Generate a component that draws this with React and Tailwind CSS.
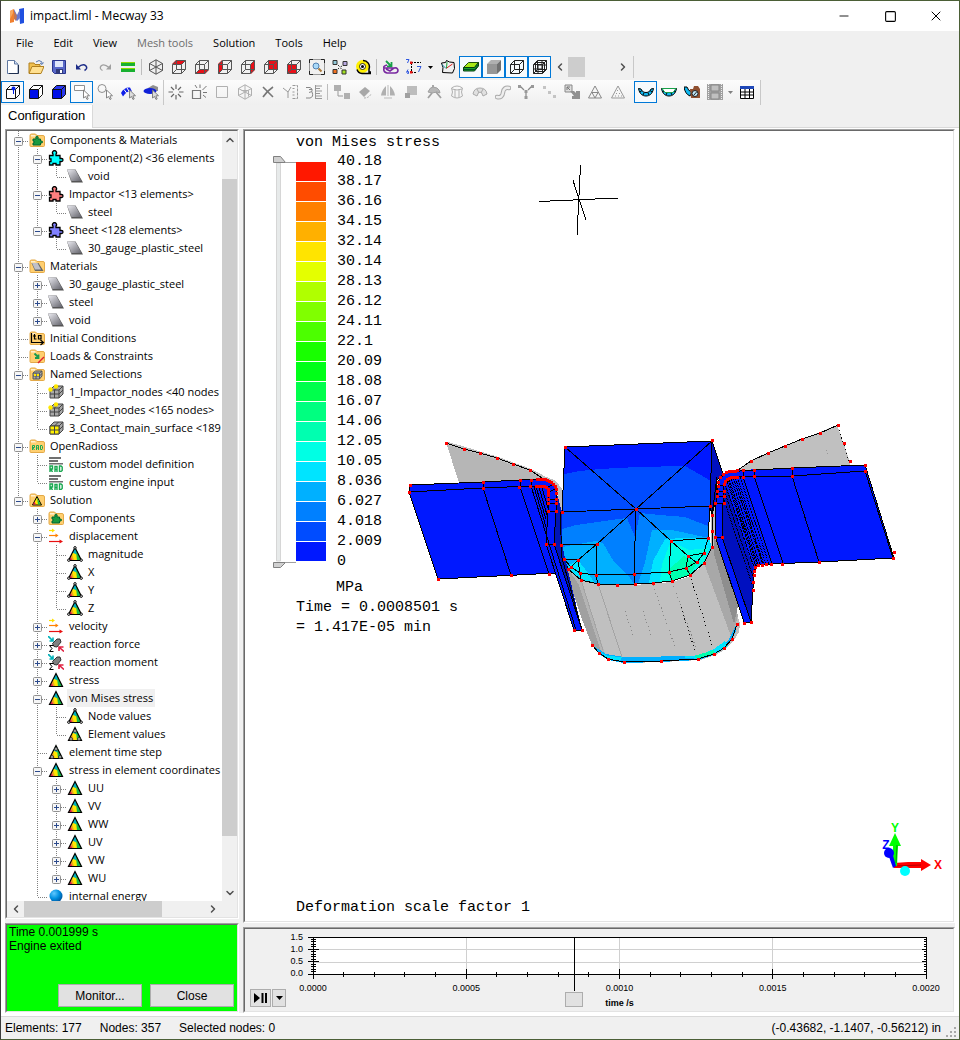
import React, { useState } from "react";
import { Minus, Square, X, ChevronLeft, ChevronRight, ChevronUp, ChevronDown } from "lucide-react";

const bands = [
  "#ff1800", "#ff4c00", "#ff8000", "#ffb000", "#ffe400", "#e4ff00", "#b0ff00", "#80ff00", "#4cff00", "#18ff00",
  "#00ff18", "#00ff4c", "#00ff80", "#00ffb0", "#00ffe4", "#00e4ff", "#00b0ff", "#0080ff", "#004cff", "#0018ff",
];

const bandLabels = [
  "40.18", "38.17", "36.16", "34.15", "32.14", "30.14", "28.13", "26.12", "24.11", "22.1", "20.09",
  "18.08", "16.07", "14.06", "12.05", "10.05", "8.036", "6.027", "4.018", "2.009", "0",
];

const tree = [
  {
    label: "Components & Materials",
    icon: "folderPuzzle",
    children: [
      { label: "Component(2) <36 elements", icon: "puzzleCyan", children: [{ label: "void", icon: "material" }] },
      { label: "Impactor <13 elements>", icon: "puzzleRed", children: [{ label: "steel", icon: "material" }] },
      {
        label: "Sheet <128 elements>",
        icon: "puzzleBlue",
        children: [{ label: "30_gauge_plastic_steel", icon: "material" }],
      },
    ],
  },
  {
    label: "Materials",
    icon: "folderMaterial",
    children: [
      { label: "30_gauge_plastic_steel", icon: "material", closed: true },
      { label: "steel", icon: "material", closed: true },
      { label: "void", icon: "material", closed: true },
    ],
  },
  { label: "Initial Conditions", icon: "folderInitial" },
  { label: "Loads & Constraints", icon: "folderLoads" },
  {
    label: "Named Selections",
    icon: "folderSelections",
    children: [
      { label: "1_Impactor_nodes <40 nodes", icon: "nodeSet" },
      { label: "2_Sheet_nodes <165 nodes>", icon: "nodeSet" },
      { label: "3_Contact_main_surface <189", icon: "faceSet" },
    ],
  },
  {
    label: "OpenRadioss",
    icon: "folderRad",
    children: [
      { label: "custom model definition", icon: "rad" },
      { label: "custom engine input", icon: "rad" },
    ],
  },
  {
    label: "Solution",
    icon: "folderSolution",
    children: [
      { label: "Components", icon: "folderPuzzle", closed: true },
      {
        label: "displacement",
        icon: "vectors",
        children: [
          { label: "magnitude", icon: "fieldNodes" },
          { label: "X", icon: "fieldNodes" },
          { label: "Y", icon: "fieldNodes" },
          { label: "Z", icon: "fieldNodes" },
        ],
      },
      { label: "velocity", icon: "vectors", closed: true },
      { label: "reaction force", icon: "reaction", closed: true },
      { label: "reaction moment", icon: "reaction", closed: true },
      { label: "stress", icon: "field", closed: true },
      {
        label: "von Mises stress",
        icon: "field",
        selected: true,
        children: [
          { label: "Node values", icon: "fieldNodes" },
          { label: "Element values", icon: "fieldElements" },
        ],
      },
      { label: "element time step", icon: "fieldElements" },
      {
        label: "stress in element coordinates",
        icon: "field",
        children: [
          { label: "UU", icon: "field", closed: true },
          { label: "VV", icon: "field", closed: true },
          { label: "WW", icon: "field", closed: true },
          { label: "UV", icon: "field", closed: true },
          { label: "VW", icon: "field", closed: true },
          { label: "WU", icon: "field", closed: true },
        ],
      },
      { label: "internal energy", icon: "ball" },
    ],
  },
];

/* ---------- tree icons ---------- */

const Svg = ({ children, size = 16 }) => (
  <svg width={size} height={size} viewBox="0 0 16 16" fill="none" className="shrink-0" aria-hidden="true">
    {children}
  </svg>
);

const Folder = ({ children }) => (
  <Svg>
    <path d="M1 3.500q0-1.500 1.500-1.500h4l1.500 1.500h6q1.500 0 1.500 1.500v8.500q0 1-1 1H2q-1 0-1-1z" fill="#ffcf70" stroke="#e3a948" />
    <path d="M2 3h4l1 1.500H2z" fill="#fff0cf" />
    {children}
  </Svg>
);

const puzzlePath =
  "M1.500 5.500h3.500v-1.500a2 2 0 1 1 3 0v1.500h4v3h1.500a1.500 1.500 0 1 1 0 3h-1.500v3.500h-4v-1.500h-3v1.500H1.500v-3.500h1.500v-2.500H1.500z";

const Puzzle = ({ fill }) => (
  <Svg>
    <path d={puzzlePath} fill={fill} stroke="#000" strokeWidth="1.300" />
  </Svg>
);

const FieldShape = () => (
  <>
    <path d="M8 1.500L1.500 14.500h13z" fill="#ffe800" />
    <path d="M8 1.500L5.500 6.500l4 2 1.500-1z" fill="#00b0c0" />
    <path d="M9 5l1 9.500h4.500L9.500 4z" fill="#18b848" />
    <path d="M5 8L2 14.500h5z" fill="#f0a020" />
    <path d="M3.500 11L1.500 14.500h4z" fill="#e02050" />
    <path d="M8 1.500L1.500 14.500h13z" stroke="#000" strokeWidth="1.200" />
  </>
);

const CubeSet = ({ children }) => (
  <>
    <path d="M2 6l4-4h9v8l-4 4H2z" fill="#a8a8a8" stroke="#444" />
    <path d="M2 6h9v8M11 6l4-4M2 10h9l4-4M6.500 6v8M6.500 6l4-4" stroke="#444" />
    {children}
  </>
);

const treeIcons = {
  folderPuzzle: (
    <Folder>
      <path d="M4 7h3v-1a1.200 1.200 0 1 1 2 0v1h2.500v2h1a1 1 0 1 1 0 2h-1v2H4v-2h1v-2H4z" fill="#1a9a40" stroke="#063" />
    </Folder>
  ),
  folderMaterial: (
    <Folder>
      <path d="M2.500 5h7l5 8H6z" fill="#666" />
      <path d="M3 5h5.500l3.500 6.500H6z" fill="#c0c0c8" />
    </Folder>
  ),
  folderInitial: (
    <Folder>
      <path d="M2.500 3v9.500H14M11.500 10l3 2.500-3 2.500M5.500 4v5h2M4 6h3M9.500 5.500H12v3.500H9.500z" stroke="#000" strokeWidth="1.200" />
    </Folder>
  ),
  folderLoads: (
    <Folder>
      <path d="M5.500 5.500l4 4M9.500 6.500v3.500H6" stroke="#169a50" strokeWidth="1.800" />
      <path d="M9 15l6-6" stroke="#e02030" strokeWidth="1.500" />
    </Folder>
  ),
  folderSelections: (
    <Folder>
      <path d="M4 7l2.500-2H13v5l-2.500 3H4z" fill="#aaa" stroke="#555" />
      <path d="M4 7h6.500v6M4 10h6.500l2.500-2.500M7 7v6M10.500 7L13 5" stroke="#555" />
      <path d="M5 8h2v2H5zM8 8h2v2H8z" fill="#ffe800" />
    </Folder>
  ),
  folderRad: (
    <Folder>
      <path
        d="M3.500 12V7.500h2v2h-2l2 2.500M7.500 12V7.500h2V12M7.500 10h2M11.500 7.500v4h1.500l.5-1v-2l-.5-1z"
        stroke="#18a850"
        strokeWidth="1"
      />
    </Folder>
  ),
  folderSolution: (
    <Folder>
      <path d="M8 4.500L3.500 13h9z" fill="#ffe800" stroke="#000" />
      <path d="M8 5.500l3.500 7H9z" fill="#18b848" />
      <path d="M5.500 9.500L4 12.500h3z" fill="#e02050" />
    </Folder>
  ),
  puzzleCyan: <Puzzle fill="#00ffff" />,
  puzzleRed: <Puzzle fill="#ff8080" />,
  puzzleBlue: <Puzzle fill="#8080ff" />,
  material: (
    <Svg>
      <defs>
        <linearGradient id="steel" x1="0" y1="0" x2="1" y2="1">
          <stop offset="0" stopColor="#ececf2" />
          <stop offset="1" stopColor="#64646c" />
        </linearGradient>
      </defs>
      <path d="M0 1.500h8.500L16 14.500H4.500z" fill="#555" />
      <path d="M0 1.500h8l6.500 11.500H4.500z" fill="url(#steel)" />
      <path d="M0 1.500l4.500 11.500v1.500z" fill="#999" />
    </Svg>
  ),
  nodeSet: (
    <Svg>
      <CubeSet>
        <circle cx="2.500" cy="5.500" r="2.200" fill="#ffe800" />
        <circle cx="8" cy="2.500" r="2.200" fill="#ffe800" />
      </CubeSet>
    </Svg>
  ),
  faceSet: (
    <Svg>
      <CubeSet>
        <path d="M2 6h9v8H2z" fill="#fff000" stroke="#444" />
        <path d="M6.500 6v8M2 10h9" stroke="#444" />
      </CubeSet>
    </Svg>
  ),
  rad: (
    <Svg>
      <path d="M1 1h12v2H1zM1 4h9v2H1zM1 7h14v1.500H1z" fill="#707070" />
      <path d="M2 16v-6h2.500v3H2.500L4.500 16M7 16v-5.500h2V16M7 13.500h2M11.500 10v5.500H13l1.200-1v-3.500l-1.200-1z" stroke="#18a850" strokeWidth="1.400" />
    </Svg>
  ),
  vectors: (
    <Svg>
      <path d="M1 2.500h4" stroke="#ffe000" strokeWidth="1.200" />
      <path d="M4 .5l3 2-3 2z" fill="#ffe000" />
      <path d="M1 7.500h7" stroke="#ff8000" strokeWidth="1.200" />
      <path d="M7.500 5.500l3 2-3 2z" fill="#ff8000" />
      <path d="M1 13.500h11" stroke="#e81010" strokeWidth="1.200" />
      <path d="M11.500 11.500l3.500 2-3.500 2z" fill="#e81010" />
    </Svg>
  ),
  reaction: (
    <Svg>
      <path d="M0 0l4.500 4.500M5 1.500V5H1.500" stroke="#00b0b8" strokeWidth="1.600" />
      <path d="M4.500 7.500l4.500-4.500h3l1 3-4 5-3-.5z" fill="#808080" stroke="#333" />
      <path d="M16 15.500l-4.500-4M11 15v-4h4.500" stroke="#e02040" strokeWidth="1.600" />
      <path d="M5.500 9.500H1.500l2.500 3-2.500 3h4" stroke="#000" />
    </Svg>
  ),
  field: (
    <Svg>
      <FieldShape />
    </Svg>
  ),
  fieldNodes: (
    <Svg>
      <FieldShape />
      <g fill="#fff" stroke="#000">
        <circle cx="8" cy="1.800" r="1.200" />
        <circle cx="1.800" cy="14.200" r="1.200" />
        <circle cx="14.200" cy="14.200" r="1.200" />
      </g>
    </Svg>
  ),
  fieldElements: (
    <Svg>
      <FieldShape />
      <g fill="#bbb" stroke="#222" strokeWidth=".8">
        <circle cx="8" cy="5" r="1.500" />
        <circle cx="4" cy="13" r="1.500" />
        <circle cx="12" cy="13" r="1.500" />
      </g>
    </Svg>
  ),
  ball: (
    <Svg>
      <defs>
        <radialGradient id="ball" cx="0.350" cy="0.300" r="0.800">
          <stop offset="0" stopColor="#60c8ff" />
          <stop offset="0.500" stopColor="#0090e0" />
          <stop offset="1" stopColor="#004890" />
        </radialGradient>
      </defs>
      <circle cx="8" cy="8" r="6.500" fill="url(#ball)" />
    </Svg>
  ),
};

/* ---------- toolbar icons ---------- */

const cubeFaces = {
  top: "M1 5l4-4h10l-4 4z",
  bottom: "M1 15l4-4h10l-4 4z",
  left: "M1 5l4-4v10l-4 4z",
  right: "M11 5l4-4v10l-4 4z",
  back: "M5 1h10v10H5z",
  front: "M1 5h10v10H1z",
};

const WireCube = ({ face, stroke = "#555" }) => (
  <Svg>
    {face && <path d={cubeFaces[face]} fill="#e81018" />}
    <path d="M1.500 5.500H10.500v9H1.500zM5.500 1.500h9v9h-9zM1.500 5.500L5.500 1.500M10.500 5.500l4-4M10.500 14.500l4-4M1.500 14.500l4-4" stroke={stroke} />
  </Svg>
);

const SolidCube = ({ front = "#fff", side = "#fff", children }) => (
  <Svg>
    <path d="M1.500 5.500l4-4h9v9l-4 4h-9z" fill={side} />
    <path d="M1.500 5.500h9v9h-9z" fill={front} />
    <path d="M1.500 5.500l4-4h9v9l-4 4h-9zM1.500 5.500h9v9M10.500 5.500l4-4" stroke="#111" />
    {children}
  </Svg>
);

const Cursor = ({ fill = "#fff" }) => (
  <path d="M9.500 6v8l2-1.500 1.500 3 1.200-.6-1.300-3 2.600-.2z" fill={fill} stroke="#777" strokeWidth=".9" />
);

const Bowl = () => (
  <>
    <path d="M0.500 4.500c1 5.500 4 7.500 7.500 7.500s6.500-2 7.500-7.500l-2.500 .5c-1 2.500-3 3.500-5 3.500S4 7.500 3 5z" fill="#10b8f0" stroke="#000" />
    <path d="M2 8l2-1.500M5 11l1.200-2.500M11 11L9.800 8.500M14 8l-2-1.500" stroke="#000" />
  </>
);

const I = {
  newFile: (
    <Svg>
      <path d="M2.500 1.500h7l3.500 3.500v9.500H2.500z" fill="#fff" stroke="#6078a0" />
      <path d="M9.500 1.500v3.500H13" stroke="#6078a0" fill="#cfe0f8" />
      <path d="M4 14.500h9.500V6" stroke="#203050" />
    </Svg>
  ),
  open: (
    <Svg>
      <path d="M1 4h5l1 1.500h5V14H1z" fill="#f0c050" stroke="#b08020" />
      <path d="M4 7.500h12L13 14.500H1z" fill="#ffe090" stroke="#b08020" />
      <path d="M8 3q3-3 6 0v2M12 4l2 1.500L15.500 3.500" stroke="#5878b0" />
    </Svg>
  ),
  save: (
    <Svg>
      <path d="M1.500 1.500h13v13h-11l-2-2z" fill="#5868c8" stroke="#28348c" />
      <path d="M4 2h8v6H4z" fill="#dfe6fa" />
      <path d="M5 10h7v4.500H5z" fill="#303a78" />
      <path d="M9 11h2v3H9z" fill="#fff" />
    </Svg>
  ),
  undo: (
    <Svg>
      <path d="M4 8.500q5-4.500 8-1.500 2 2.500-1.500 4.500" stroke="#1c2c88" strokeWidth="1.500" />
      <path d="M2 5v5.500h5z" fill="#1c2c88" />
    </Svg>
  ),
  redo: (
    <Svg>
      <path d="M12 8.500q-5-4.500-8-1.500-2 2.500 1.500 4.500" stroke="#a0a0a0" strokeWidth="1.300" />
      <path d="M14 5v5.500H9z" fill="#a0a0a0" />
    </Svg>
  ),
  equals: (
    <Svg>
      <path d="M1 4h14v3H1zM1 10h14v3H1z" fill="#18b030" />
      <path d="M1 3.500h14M1 9.500h14" stroke="#90d800" />
    </Svg>
  ),
  iso: (
    <Svg>
      <path d="M8 .8l6.500 3.700v7L8 15.200l-6.500-3.700v-7zM8 .8v14.400M1.500 4.500l13 7M14.500 4.500l-13 7" stroke="#555" />
    </Svg>
  ),
  zoomFit: (
    <Svg>
      <path d="M.5 4V.5H4M12 .5h3.500V4M15.500 12v3.500H12M4 15.500H.5V12" stroke="#222" />
      <path d="M4 .5h8M15.500 4v8M12 15.500H4M.5 12V4" stroke="#999" />
      <circle cx="7" cy="7" r="3" fill="#a8d8f8" stroke="#5080b0" />
      <path d="M9.500 9.500l3 3" stroke="#a87838" strokeWidth="2" />
    </Svg>
  ),
  explode: (
    <Svg>
      <path d="M1 1.500h4v4H1z" fill="#90c8d8" stroke="#333" />
      <path d="M11 2.500h4v4h-4z" fill="#b8a8e0" stroke="#333" />
      <path d="M1 10.500h4v4H1z" fill="#f07020" stroke="#333" />
      <path d="M10 11h4v4h-4z" fill="#a0e020" stroke="#333" />
      <path d="M6 6l1.500 1.500M10 7L8.500 8M6 10l1-1M9.500 10L8.500 9" stroke="#333" />
    </Svg>
  ),
  tape: (
    <Svg>
      <circle cx="7.500" cy="7.500" r="6.500" fill="#fff000" />
      <path d="M8 1.500a6.300 6.300 0 0 1 6 8.500v3h1.500v1.500H7a6 6 0 0 1-5-4" stroke="#000" strokeWidth="1.500" />
      <circle cx="7.500" cy="7.500" r="3" fill="#fff" stroke="#000" strokeWidth=".8" />
      <circle cx="7.500" cy="7.500" r="1.500" fill="#000" />
    </Svg>
  ),
  loads: (
    <Svg>
      <path d="M3 2l5 5M8.500 3v4.500H4" stroke="#18a048" strokeWidth="1.800" />
      <path d="M4 6q-4 1-3 3h13M1 9q-1 4 3 5h8q3 0 3-3-1-3-4-2l-4 3-4-2" stroke="#7828a0" strokeWidth="1.600" />
    </Svg>
  ),
  dims: (
    <Svg>
      <path d="M5 3.500h10M5.500 4v9M5 13.500h5" stroke="#000" strokeDasharray="2 1" />
      <path d="M4 2.500h2.500V5H4zM4 12h2.500v2.500H4z" fill="#e81010" />
      <path d="M0 .5h3L1.500 4M11 7.500h4L12.500 13M2 10.500q-2.500 3-.5 4h1v-2h-1.500" stroke="#3058e0" />
    </Svg>
  ),
  plane: (
    <Svg>
      <path d="M1.500 4l4-.5 1-2 3 1.500 4.500 .5 .5 6-2 4.500-10-.5 .5-5z" stroke="#000" />
      <path d="M6 9.500l6.500-4.500" stroke="#e02020" />
      <path d="M2 5.500l4 4" stroke="#1890b0" />
      <path d="M7 3l-.5 6" stroke="#18a038" />
    </Svg>
  ),
  shell: (
    <Svg>
      <path d="M.5 8.500l5-5h10l-4 5z" fill="#a8e818" stroke="#205010" />
      <path d="M.5 8.500v3.500h11l4-5V3.500l-4 5z" fill="#18a030" stroke="#084010" />
      <path d="M1 10.500h11l3-4.500" stroke="#052" />
    </Svg>
  ),
  shaded: (
    <Svg>
      <path d="M1 5l4-4h10l-4 4z" fill="#b0b0b0" />
      <path d="M11 5l4-4v10l-4 4z" fill="#707070" />
      <path d="M1 5h10v10H1z" fill="#969696" />
    </Svg>
  ),
  edges: <WireCube stroke="#222" />,
  meshCube: (
    <Svg>
      <path
        d="M1.500 5.500h9v9h-9zM5.500 1.500h9v9h-9zM1.500 5.500l4-4M10.500 5.500l4-4M10.500 14.500l4-4M1.500 14.500l4-4M6 5.500v9M1.500 10h9M10 1.500v9M5.500 6h9M3.500 3.500h9v9h-9z"
        stroke="#222"
      />
    </Svg>
  ),
  selNode: (
    <SolidCube>
      <path d="M8.500 5v5" stroke="#0020e8" />
      <circle cx="8.500" cy="4.500" r="2" fill="#0020e8" />
    </SolidCube>
  ),
  selFace: <SolidCube front="#0010e8" />,
  selElem: <SolidCube front="#0010e8" side="#2838f0" />,
  selRect: (
    <Svg>
      <path d="M.5 1.500h10v5H.5z" fill="#fff" stroke="#909090" />
      <Cursor />
    </Svg>
  ),
  selCircle: (
    <Svg>
      <circle cx="5" cy="4.500" r="4" stroke="#909090" />
      <Cursor />
    </Svg>
  ),
  selPatch: (
    <Svg>
      <path d="M1 9q3-6 9-5.500l2 4q-5-1-9 5z" fill="#1020e8" />
      <path d="M4 5.500l3 4M7 4l2.500 4" stroke="#fff" />
      <Cursor fill="#ddd" />
    </Svg>
  ),
  selSolid: (
    <Svg>
      <path d="M5 4l5-3 5 2v4H6z" fill="#909090" />
      <ellipse cx="7" cy="7" rx="6.500" ry="3" fill="#1020d8" />
      <Cursor fill="#ddd" />
    </Svg>
  ),
  burst: (
    <Svg>
      <path d="M8 0.500v4.500M8 11v4.500M.5 8H5M11 8h4.500M3 3l3 3M10 10l3 3M13 3l-3 3M6 10l-3 3" stroke="#666" strokeWidth="1.200" />
    </Svg>
  ),
  burstBox: (
    <Svg>
      <path d="M1.500 6.500h8v8h-8z" stroke="#777" strokeWidth="1.200" />
      <path d="M9 .5v3.500M11.500 6l4-4M12 8.500h4M4 1l2 3M12 11l3 2.500" stroke="#777" />
    </Svg>
  ),
  box: (
    <Svg>
      <path d="M2.500 2.500h11v11h-11z" stroke="#b0b0b0" />
    </Svg>
  ),
  isoDim: (
    <Svg>
      <path d="M8 .8l6.500 3.700v7L8 15.200l-6.500-3.700v-7zM8 .8v14.400M1.500 4.500l13 7M14.500 4.500l-13 7M4.500 6.500h7v6" stroke="#b0b0b0" />
    </Svg>
  ),
  cross: (
    <Svg>
      <path d="M3 3q4 4 10 10M13 3Q7 7 3 13" stroke="#777" strokeWidth="1.600" />
    </Svg>
  ),
  ruler1: (
    <Svg>
      <path d="M0 4l5 4v6M5 8l3-5" stroke="#999" />
      <path d="M9.500 1.500h5v13h-5M9.500 4.500h2M9.500 8h2M9.500 11h2" stroke="#999" strokeDasharray="3 1" />
    </Svg>
  ),
  ruler2: (
    <Svg>
      <path d="M0 3.500h4q3 1 2 4l-3 1M0 14h4q4-1 2-6M3 5.500h3" stroke="#888" />
      <path d="M10 2h6M10 4.500h4M10 7h6M10 9.500h4M10 12h6M10 14.500h6M9.500 1v14" stroke="#999" />
    </Svg>
  ),
  move: (
    <Svg>
      <path d="M0 1h7v6H0zM10 9h6v6h-6z" fill="#b0b0b0" />
      <path d="M4 7v5h5" stroke="#999" />
    </Svg>
  ),
  rotate: (
    <Svg>
      <path d="M2 8l6-5 5 4-6 6z" fill="#a8a8a8" />
      <path d="M7 14q5 0 7-4" stroke="#b0b0b0" strokeDasharray="2 1" />
    </Svg>
  ),
  mirror: (
    <Svg>
      <path d="M6 2v9.500H1q1-6 5-9.500zM10 2v9.500h5q-1-6-5-9.500z" fill="#b0b0b0" />
      <path d="M4 14h8M8 1v11" stroke="#bbb" />
    </Svg>
  ),
  scale: (
    <Svg>
      <path d="M4 2h10v9H4z" fill="#bdbdbd" />
      <path d="M2 9h5v5H2z" fill="#a0a0a0" />
    </Svg>
  ),
  clamp: (
    <Svg>
      <path d="M2 8q2-5 5-5l4 1q3 2 3 5l-3-1-5 1z" fill="#b8b8b8" stroke="#a0a0a0" />
      <path d="M7 3V1M10 8l5 6M6 9l-4 5" stroke="#a0a0a0" strokeWidth="1.800" />
    </Svg>
  ),
  barrel: (
    <Svg>
      <path d="M2.500 4q5.500-4 11 0-2 4 0 8-5.500 4-11 0 2-4 0-8zM6 5.500v8M10 5.500v8M3 5q5 2 10 0" stroke="#b0b0b0" />
    </Svg>
  ),
  arch: (
    <Svg>
      <path d="M1 10q1-6 7-6t7 6l-4 2q-1-4-3-4t-3 4zM5 5l2 4M11 5L9 9" stroke="#aaa" fill="#e0e0e0" />
    </Svg>
  ),
  worm: (
    <Svg>
      <path d="M2 13q5.500 1 6-4.500t6-4.500" stroke="#aaa" strokeWidth="4.500" strokeLinecap="round" />
      <path d="M2 13q5.500 1 6-4.500t6-4.500" stroke="#eee" strokeWidth="2.500" strokeLinecap="round" />
    </Svg>
  ),
  merge: (
    <Svg>
      <path d="M2 2l4 4M14 2l-4 4M8 9v5" stroke="#888" strokeWidth="1.200" />
      <path d="M0 1h3v3H0zM13 1h3v3h-3zM6.500 12h3v3h-3zM6.500 6h3v3h-3z" fill="#999" />
    </Svg>
  ),
  dots: (
    <Svg>
      <path d="M2 2h3v3H2zM7 7h3v3H7zM12 11h3v3h-3z" fill="#c4c4c4" />
    </Svg>
  ),
  resize: (
    <Svg>
      <path d="M1 1h7v7H1z" fill="#ddd" stroke="#888" />
      <path d="M6 7h4l2 2V7h4v8H8v-3h2z" fill="#909090" />
      <path d="M3 6V3h3M3 3l3 3" stroke="#777" />
    </Svg>
  ),
  triMesh: (
    <Svg>
      <path d="M8 2L1.500 14h13zM5 8.500h6L8 14z" stroke="#888" />
    </Svg>
  ),
  triDots: (
    <Svg>
      <path d="M8 2L1.500 14h13z" stroke="#999" />
      <path d="M7 6.500h1M6 9.500h1M9 9.500h1M5 12h1M8 12h1M11 12h1" stroke="#999" />
    </Svg>
  ),
  bowl: (
    <Svg>
      <Bowl />
    </Svg>
  ),
  bowlGreen: (
    <Svg>
      <Bowl />
      <path d="M1 4.500h14l-3 4H4z" fill="#fff" stroke="#18a048" />
    </Svg>
  ),
  bowlPhoto: (
    <Svg>
      <path d="M0 3q1 7 6 9l2-4Q4 7 3 3z" fill="#10b8f0" stroke="#000" />
      <path d="M6 5h3l1-3h4l2 3v9H7z" fill="#905030" />
      <circle cx="11" cy="9.500" r="3" fill="#c0e8f8" stroke="#222" />
      <path d="M9.500 11.500l3.500-4" stroke="#222" />
    </Svg>
  ),
  film: (
    <Svg>
      <path d="M0 0h16v16H0z" fill="#a0a0a0" />
      <path d="M1.500 0v16M14.500 0v16" stroke="#eee" strokeDasharray="1 1" />
      <path d="M4 1h8v6H4zM4 9h8v6H4z" fill="#c0c0c0" stroke="#888" />
    </Svg>
  ),
  table: (
    <Svg>
      <path d="M1.500 2.500h13v12h-13z" fill="#fff" stroke="#000" />
      <path d="M1 2h14v3H1z" fill="#2048b8" />
      <path d="M1.500 8h13M1.500 11h13M6 5v9.500M10.500 5v9.500" stroke="#000" />
    </Svg>
  ),
};

const Tool = ({ icon, name, active }) => (
  <button
    type="button"
    title={name}
    aria-label={name}
    aria-pressed={active ? true : undefined}
    className={
      active
        ? "mt-px flex h-[22px] w-[23px] items-center justify-center border border-[#0078d7] bg-[#f6fafd]"
        : "mt-px flex h-[22px] w-[23px] items-center justify-center"
    }
  >
    {I[icon] || icon}
  </button>
);

const Separator = () => <span className="mx-[2px] mt-[4px] h-[16px] w-px bg-[#bdbdbd]" />;

const Caret = ({ className = "" }) => (
  <svg width="5" height="3" viewBox="0 0 5 3" className={className} aria-hidden="true">
    <path d="M0 0h5L2.500 3z" fill="currentColor" />
  </svg>
);

const Sunken = ({ className = "", inner = "", children }) => (
  <div className={`flex border border-t-[#a0a0a0] border-l-[#a0a0a0] border-r-white border-b-white ${className}`}>
    <div
      className={`min-w-0 flex-1 border border-t-[#696969] border-l-[#696969] border-r-[#e3e3e3] border-b-[#e3e3e3] ${inner}`}
    >
      {children}
    </div>
  </div>
);

const TitleBar = () => (
  <header className="flex h-[30px] shrink-0 items-center bg-white pl-2">
    <svg width="16" height="18" viewBox="0 0 16 18" aria-hidden="true">
      <path d="M1 4l4-2v13l-4 1z" fill="#f08030" />
      <path d="M10 2l5-1v15l-4 1z" fill="#2050e0" />
      <path d="M5 2l3 6 3-6v9l-3 3-3-3z" fill="#6878d0" />
      <path d="M5 4l3 5-1 5-2-2z" fill="#c07858" />
      <path d="M1 4l3-1.500V6l-3 6z" fill="#f8a860" />
    </svg>
    <h1 className="ml-[5px] flex-1 text-xs">impact.liml - Mecway 33</h1>
    <button type="button" aria-label="Minimize" className="flex w-[46px] justify-center">
      <Minus size={14} strokeWidth={1.5} />
    </button>
    <button type="button" aria-label="Maximize" className="flex w-[46px] justify-center">
      <Square size={13} strokeWidth={2} />
    </button>
    <button type="button" aria-label="Close window" className="flex w-[46px] justify-center">
      <X size={16} strokeWidth={1.5} />
    </button>
  </header>
);

const menus = ["File", "Edit", "View", "Mesh tools", "Solution", "Tools", "Help"];

const MenuBar = () => (
  <nav className="flex h-6 shrink-0 items-center pl-[5px] text-[11px]">
    {menus.map((m) => (
      <button key={m} type="button" disabled={m === "Mesh tools"} className="px-[10px] disabled:text-[#6d6d6d]">
        {m}
      </button>
    ))}
  </nav>
);

const Toolbars = () => (
  <div className="shrink-0">
    <div className="flex h-[25px] items-start">
      <Tool icon="newFile" name="New" />
      <Tool icon="open" name="Open" />
      <Tool icon="save" name="Save" />
      <Tool icon="undo" name="Undo" />
      <Tool icon="redo" name="Redo" />
      <Tool icon="equals" name="Solve" />
      <Separator />
      <Tool icon="iso" name="Isometric view" />
      <Tool icon={<WireCube face="top" />} name="Top view" />
      <Tool icon={<WireCube face="bottom" />} name="Bottom view" />
      <Tool icon={<WireCube face="left" />} name="Left view" />
      <Tool icon={<WireCube face="right" />} name="Right view" />
      <Tool icon={<WireCube face="back" />} name="Back view" />
      <Tool icon={<WireCube face="front" />} name="Front view" />
      <Tool icon="zoomFit" name="Fit to window" />
      <Tool icon="explode" name="Exploded view" />
      <Tool icon="tape" name="Measure" />
      <Separator />
      <Tool icon="loads" name="Show loads" />
      <Tool icon="dims" name="Node labels" />
      <button type="button" aria-label="Label options" className="mt-px flex h-[22px] w-[11px] items-center justify-center">
        <Caret />
      </button>
      <Tool icon="plane" name="Cutting plane" />
      <Tool icon="shell" name="Shell thickness" active />
      <Tool icon="shaded" name="Shaded" active />
      <Tool icon="edges" name="Edges" active />
      <Tool icon="meshCube" name="Mesh" active />
      <div className="mt-px flex h-[22px] w-[83px] items-center border-r border-[#c8c8c8] bg-[#f0f0f0]">
        <button type="button" aria-label="Previous step" className="flex w-[17px] justify-center">
          <ChevronLeft size={12} strokeWidth={3} className="text-[#505050]" />
        </button>
        <span className="h-[20px] w-[17px] bg-[#cdcdcd]" />
        <button type="button" aria-label="Next step" className="ml-auto mr-[4px] flex w-[12px] justify-center">
          <ChevronRight size={12} strokeWidth={3} className="text-[#505050]" />
        </button>
      </div>
    </div>
    <div className="flex h-[25px]">
      <div className="flex items-start border-r border-[#c8c8c8] bg-linear-to-b from-[#fcfcfc] to-[#efefef] pr-px">
        <Tool icon="selNode" name="Select nodes" active />
        <Tool icon="selFace" name="Select faces" />
        <Tool icon="selElem" name="Select elements" />
        <Tool icon="selRect" name="Rectangle select" active />
        <Tool icon="selCircle" name="Circle select" />
        <Tool icon="selPatch" name="Select surface" />
        <Tool icon="selSolid" name="Select body" />
      </div>
      <div className="flex items-start bg-linear-to-b from-[#fcfcfc] to-[#efefef] pr-[2px]">
        <Tool icon="burst" name="New node" />
        <Tool icon="burstBox" name="New element" />
        <Tool icon="box" name="Quad element" />
        <Tool icon="isoDim" name="Hex element" />
        <Tool icon="cross" name="Delete" />
        <Tool icon="ruler1" name="Edit coordinates" />
        <Tool icon="ruler2" name="Edit thickness" />
        <Separator />
        <Tool icon="move" name="Move" />
        <Tool icon="rotate" name="Rotate" />
        <Tool icon="mirror" name="Mirror" />
        <Tool icon="scale" name="Scale" />
        <Tool icon="clamp" name="Hollow" />
        <Tool icon="barrel" name="Extrude" />
        <Tool icon="arch" name="Revolve" />
        <Tool icon="worm" name="Sweep" />
        <Tool icon="merge" name="Merge nodes" />
        <Tool icon="dots" name="Unmerge nodes" />
        <Tool icon="resize" name="Refine" />
        <Tool icon="triMesh" name="Automesh 2D" />
        <Tool icon="triDots" name="Automesh 3D" />
      </div>
      <div className="flex items-start border-r border-[#c8c8c8] bg-linear-to-b from-[#fcfcfc] to-[#efefef] pr-[2px] pl-[3px]">
        <Tool icon="bowl" name="Deformed view" active />
        <Tool icon="bowlGreen" name="Undeformed view" />
        <Tool icon="bowlPhoto" name="Save image" />
        <Tool icon="film" name="Animation" />
        <button
          type="button"
          aria-label="Animation options"
          className="mt-px flex h-[22px] w-[9px] items-center justify-center"
        >
          <Caret className="text-[#808080]" />
        </button>
        <Tool icon="table" name="Table" />
      </div>
    </div>
  </div>
);

/* ---------- outline tree ---------- */

const Guide = ({ on }) => (
  <svg width="19" height="18" className="shrink-0" aria-hidden="true">
    {on && <path d="M11.500 0v18" stroke="#808080" strokeDasharray="1 1" />}
  </svg>
);

const Branch = ({ last, state }) => (
  <svg width="22" height="18" fill="none" aria-hidden="true">
    <path d={last ? "M11.500 0v10" : "M11.500 0v18"} stroke="#808080" strokeDasharray="1 1" />
    <path d="M12 10.500h10" stroke="#808080" strokeDasharray="1 1" />
    {state && (
      <>
        <rect x="7.500" y="6.500" width="8" height="8" rx="1" fill="#f6f6f6" stroke="#919191" />
        <path d={state === "+" ? "M9 10.500h5M11.500 8v5" : "M9 10.500h5"} stroke="#2c4a8c" />
      </>
    )}
  </svg>
);

const TreeNode = ({ node, last, guides }) => {
  const [open, setOpen] = useState(!node.closed);
  const expandable = node.children || node.closed;

  return (
    <li>
      <div className="flex h-[18px] items-center">
        {guides.map((on, i) => (
          <Guide key={i} on={on} />
        ))}
        {expandable ? (
          <button
            type="button"
            aria-label={`Toggle ${node.label}`}
            aria-expanded={open}
            onClick={() => setOpen(!open)}
            className="shrink-0"
          >
            <Branch last={last} state={node.children && open ? "-" : "+"} />
          </button>
        ) : (
          <span className="shrink-0">
            <Branch last={last} />
          </span>
        )}
        {treeIcons[node.icon]}
        <span
          className={
            node.selected
              ? "ml-[3px] bg-[#f0f0f0] px-[2px] leading-[18px] whitespace-nowrap"
              : "ml-[3px] px-[2px] leading-[18px] whitespace-nowrap"
          }
        >
          {node.label}
        </span>
      </div>
      {open && node.children && (
        <ul>
          {node.children.map((child, i) => (
            <TreeNode
              key={child.label}
              node={child}
              last={i === node.children.length - 1}
              guides={[...guides, !last]}
            />
          ))}
        </ul>
      )}
    </li>
  );
};

const TreePanel = () => (
  <Sunken className="min-h-0 flex-1 bg-white" inner="flex flex-col">
    <div className="flex min-h-0 flex-1">
      <ul className="min-w-0 flex-1 overflow-hidden text-[11px]">
        {tree.map((node, i) => (
          <TreeNode key={node.label} node={node} last={i === tree.length - 1} guides={[]} />
        ))}
      </ul>
      <div className="flex w-[15px] flex-col items-center bg-[#f0f0f0] text-[#505050]">
        <button type="button" aria-label="Scroll up" className="flex h-[17px] shrink-0 items-center">
          <ChevronUp size={12} strokeWidth={3} />
        </button>
        <span className="mt-[31px] w-full flex-1 bg-[#cdcdcd]" />
        <button type="button" aria-label="Scroll down" className="mt-[48px] flex h-[17px] shrink-0 items-center">
          <ChevronDown size={12} strokeWidth={3} />
        </button>
      </div>
    </div>
    <div className="flex h-[16px] items-center bg-[#f0f0f0] pr-[16px] text-[#505050]">
      <button type="button" aria-label="Scroll left" className="flex w-[17px] shrink-0 justify-center">
        <ChevronLeft size={12} strokeWidth={3} />
      </button>
      <span className="h-full w-[138px] bg-[#cdcdcd]" />
      <button type="button" aria-label="Scroll right" className="ml-auto flex w-[17px] shrink-0 justify-center">
        <ChevronRight size={12} strokeWidth={3} />
      </button>
    </div>
  </Sunken>
);

const SolverPanel = () => (
  <Sunken className="h-[90px] shrink-0" inner="flex flex-col bg-[#00ff00] px-[2px]">
    <p className="leading-[14px]">Time 0.001999 s</p>
    <p className="leading-[14px]">Engine exited</p>
    <div className="mt-auto mb-[4px] flex justify-end gap-2 pr-px">
      <button type="button" className="h-[23px] w-[84px] border border-[#adadad] bg-[#e1e1e1]">
        Monitor...
      </button>
      <button type="button" className="h-[23px] w-[84px] border border-[#adadad] bg-[#e1e1e1]">
        Close
      </button>
    </div>
  </Sunken>
);

/* ---------- 3D view ---------- */

const nodes = [
  // left wing and plate
  [446, 443], [464, 449], [480, 453], [497, 458], [513, 464], [530, 470],
  [410, 485], [409, 492], [483, 482], [483, 488], [520, 480], [519, 487], [531, 480], [530, 486],
  [438, 579], [511, 575], [549, 574],
  [537, 479], [539, 479], [541, 479], [543, 479], [545, 479], [547, 480], [549, 481], [551, 482], [553, 484], [555, 486], [556, 489], [556, 493], [556, 499], [556, 503], [556, 511],
  [536, 486], [538, 486], [540, 486], [542, 486], [544, 486], [546, 487], [548, 489], [548, 492], [548, 495], [548, 499], [548, 503], [548, 511],
  [546, 544], [554, 544], [574, 630], [582, 630],
  // punch
  [565, 447], [712, 440], [636, 509], [562, 512], [710, 506], [561, 545], [597, 544], [578, 560], [564, 559], [571, 567], [580, 573],
  [596, 575], [634, 574], [671, 541], [669, 572], [688, 556], [686, 568], [697, 562], [704, 553], [708, 538], [712, 547],
  [568, 569], [581, 580], [598, 584], [617, 585], [635, 584], [653, 583], [672, 581], [690, 575], [704, 563], [712, 531], [712, 515],
  // cup bottom
  [592, 645], [599, 653], [608, 659], [624, 662], [661, 661], [698, 659], [714, 654], [724, 648], [732, 639], [737, 624],
  // right plate
  [744, 623], [751, 622], [715, 537], [722, 537], [715, 503], [724, 503], [717, 496], [724, 496], [717, 491], [718, 486], [724, 491],
  [718, 482], [720, 477], [723, 474], [726, 472], [729, 471], [732, 471], [735, 471], [737, 470], [743, 470], [754, 470], [792, 468], [865, 465],
  [724, 484], [725, 481], [727, 479], [729, 478], [731, 477], [734, 477], [737, 477], [743, 477], [754, 476], [792, 476], [865, 471],
  [894, 552], [893, 558], [819, 562], [782, 564], [771, 564], [766, 564], [762, 565], [758, 565], [755, 567], [754, 571], [754, 575], [753, 582], [753, 590],
  // right wing
  [838, 425], [820, 433], [802, 439], [785, 446], [768, 453], [751, 461], [844, 443], [850, 461],
];

const Model = () => (
  <svg
    width="708"
    height="790"
    viewBox="245 131 708 790"
    fill="none"
    className="pointer-events-none absolute top-0 left-0"
    role="img"
    aria-label="Deformed mesh coloured by von Mises stress"
    shapeRendering="crispEdges"
  >
    {/* rotation centre */}
    <path d="M539 201.500L618 198M580.500 165L577 235M573 180.500L586 220" stroke="#000" />

    {/* wings behind the plates */}
    <path d="M446 442l18 5 16 5 17 5 16 6 17 6 15 8v6l-86 0z" fill="#b6b6b6" />
    <path d="M446 443l18 5 16 5 17 5 16 6 17 6 15 8 10 4 6 8 3 14" stroke="#c0c0c0" strokeWidth="3" />
    <path d="M446 443l18 6 16 4 17 5 16 6 17 6 12 8" stroke="#000" />
    <path d="M738 470l13-9 17-8 17-7 17-7 18-7 17-7 13 37v6l-112 5z" fill="#c0c0c0" />
    <path d="M738 470l13-9 17-8 17-7 17-7 18-6 18-8" stroke="#000" />
    <path d="M838 426l12 38" stroke="#000" strokeDasharray="1 3" />
    <path d="M826 450l2 6" stroke="#999" strokeDasharray="1 2" />

    {/* cup wall */}
    <path
      d="M556 488l5 2 2 30 0 40 5 10 13 10 17 4 37 1 37-3 18-6 14-12 7-16 0-30 3-17h3v45l23 78-1 8-5 8-8 9-10 6-16 5-37 2-37 1-16-3-9-6-7-8-10-25z"
      fill="#c0c0c0"
    />
    <path d="M562 545l6 24 13 11 24 74-10-5-13-29z" fill="#b4b4b4" />
    <path d="M560 552l8 17 11 16 22 66-9-6-11-28z" fill="#a0a0a0" />
    <path d="M712 545l6 12 20 58-3 12-3 12-28-76z" fill="#a8a8a8" />
    <path d="M714 538l10 12 14 56-4 18-20-70z" fill="#8e8e8e" />
    <path d="M581 580l22 70M598 584l24 73" stroke="#a4a4a4" />
    <path d="M625 611l10 30M643 611l10 30M653 585l22 62M672 582l24 66" stroke="#888" strokeDasharray="1 3" />
    <path d="M690 575l24 76" stroke="#000" strokeDasharray="1 3" />
    <path d="M681 607l14 44" stroke="#111" strokeDasharray="1 3" />

    {/* cup bottom rim */}
    <path d="M592 645l14 9 18 3 74-1 16-6 14-9 9-18-1 8-5 9-8 9-10 6-15 5-37 2-37 1-16-3-9-6z" fill="#00b0ff" />
    <path d="M599 651l9 5 14 1-2 4-12-2z" fill="#00e4ff" />
    <path d="M680 657l20-2 14-6 11-8 3 4-4 4-10 6-16 4z" fill="#00e4ff" />
    <path d="M694 656l20-6 1 4-16 5z" fill="#00ffb0" />
    <path d="M592 645l7 8 9 6 16 3 37-1 37-2 16-5 10-6 8-9 5-15" stroke="#000" />

    {/* punch face */}
    <path d="M712 441l11 33-6 6-1 20-4 15-2-9z" fill="#0010c0" stroke="#000" />
    <path
      d="M565 447l147-6-2 65-1 32 3 9-8 16-14 12-18 6-37 3-37-0-17-4-13-11-6-14-0-42z"
      fill="#0018ff"
    />
    <path d="M564 474l16-3 20-2 37-2 48-1 14 8 12 7-1 25-1 32 2 9-7 16-14 12-18 6-37 3-37 0-17-4-13-11-6-14 0-42z" fill="#004cff" />
    <path d="M562 529l14-4 28-4 23-3 8 19 5-24 20 2 25 2 23 9 1 12 3 9-8 16-14 12-18 6-37 3-37 0-17-4-13-11-6-14z" fill="#0080ff" />
    <path d="M562 547l34-6 7 2 11 19 14 13 6 9-19 1-17-1-17-4-13-11-5-10z" fill="#00b0ff" />
    <path d="M638 584l7-22 7-32 20 0 37 8 3 9-8 16-14 12-18 6z" fill="#00b0ff" />
    <path d="M649 583l4-22 12-22 20-1 24 0 3 9-8 16-14 12-18 6z" fill="#00e4ff" />
    <path d="M660 582l2-18 9-23 18 9 20-2-5 15-14 12-18 6z" fill="#00ffe4" />
    <path d="M667 571l17-15 5 4 8 3-7 12-18 6z" fill="#00ffb0" />
    <path d="M566 567l12-7 10 13 6 9-13-2z" fill="#00e4ff" />
    <path d="M562 559l2 0 7 8 9 6 16 2 38-1 35-2 17-4 11-6 7-9 4-15 2-32 2-65-147 6" stroke="#000" />
    <path d="M565 447l-3 65-1 33 3 14 4 10 13 11 17 4 19 1 36-2 19-2 18-6 14-12 8-16v-32l5-38" stroke="#000" />
    <path d="M565 447l71 62 76-68M562 512l74-3 74-3M636 509l-2 65 1 10M636 509l-39 35-19 16-7 7M636 509l35 32 17 15 9 7" stroke="#000" />
    <path d="M561 545l36-1-1 31 2 9M708 538l-37 3-2 31 3 9M564 559l14 1 2 13 1 7M704 553l-16 3-2 12 4 7" stroke="#000" />

    {/* left plate */}
    <path d="M556 490l6 22v33l20 85-28-86z" fill="#0014b8" />
    <path d="M410 485l110-5 25-1 6 3 5 6 0 23-2 33 28 86h-8l-19-57-117 6-29-87z" fill="#0018ff" />
    <path d="M410 485l73-3 37-2 25-1 6 3 5 6v23l-2 33 28 86h-8l-28-86 2-33v-20l-2-5-15 0-48 2-74 4z" stroke="#000" />
    <path d="M409 492l29 87 118-6M483 482v6l28 87M520 480v7l29 87M531 480v6l45 144M560 512l2 46 20 72" stroke="#000" />
    <path d="M536 487l10 32M539 487l8 28M542 488l6 20M534 487l12 40M548 487l7-3M548 492l8-3M548 499h8M548 503h8M548 511h8M546 544h8" stroke="#000" />

    {/* right plate */}
    <path d="M724 484l8-6 22 86-1 26-2 32-29-85z" fill="#0010c0" />
    <path d="M865 465l29 93-123 6-13 1-4 6-29-90-1 22-2 34 29 85-7 1-29-86 0-34 4-22 5-7 14-4z" fill="#0018ff" />
    <path d="M723 484l30 87-1 49-29-83z" fill="#0010c0" />
    <path d="M726 472l28-2 38-2 73-3 29 93-74 4-49 2-13 1-4 6-3 51h-7l-29-86 1-34 3-22zM865 471l-73 5-38 0-23 1-5 3-3 7v16l-1 34 29 85M865 471l28 87" stroke="#000" />
    <path d="M743 470v7l29 87M754 470v6l29 87M792 468v8l27 86" stroke="#000" />
    <path
      d="M724 490l30 90M725 484l30 86M727 481l29 86M729 479l29 86M731 478l29 87M733 477l30 88M735 477l29 88"
      stroke="#000"
      strokeDasharray="3 1"
    />
    <path d="M724 500l28 84M728 480l29 86M737 477l29 87M740 477l29 87" stroke="#000" strokeDasharray="2 1" />
    <path d="M715 503h8M717 496h7M717 491h7M718 485h7M715 537h8" stroke="#000" />

    {nodes.map(([x, y]) => (
      <rect key={`${x}-${y}`} x={x - 1} y={y - 1} width="3" height="3" fill="#ff0000" />
    ))}
  </svg>
);

const Triad = () => (
  <svg width="66" height="58" viewBox="880 820 66 58" className="absolute right-[7px] bottom-[43px]" role="img" aria-label="Axes">
    <path d="M894 863l14-1h13v-3l10 6-10 6v-3l-27 0z" fill="#ff0000" />
    <path d="M894 866l27-1" stroke="#b00000" />
    <path d="M893 866v-20h-4l6-13 6 13h-3l-1 20z" fill="#00ff00" />
    <path d="M897 845l-1 18" stroke="#00a000" />
    <path d="M893 868l-5-14 4-2 4 14z" fill="#0000ff" />
    <circle cx="889" cy="853" r="5" fill="#0000ff" />
    <circle cx="905" cy="871" r="5" fill="#00ffff" />
    <g fontFamily="Liberation Sans, Arial, sans-serif" fontSize="12" fontWeight="bold" textAnchor="middle">
      <text x="938" y="869" fill="#ff0000">X</text>
      <text x="895" y="832" fill="#00ff00">Y</text>
      <text x="886" y="849" fill="#0000ff">Z</text>
    </g>
  </svg>
);

const LegendSlider = () => (
  <div className="relative mt-[4px] h-[412px] w-[23px]">
    <svg width="23" height="412" fill="none" aria-hidden="true">
      <path d="M3.500 7v398h4V7z" fill="#e7eaea" stroke="#d6d6d6" />
      <path d="M13 6.500h10M13 406.500h10" stroke="#a0a0a0" />
      <path d="M.5 .5h7l5 6H.5zM.5 406.500h12l-5 5H.5z" fill="#d0d0d0" stroke="#808080" />
    </svg>
    <input
      type="range"
      aria-label="Colour scale limits"
      defaultValue="100"
      className="absolute inset-0 h-full w-[13px] opacity-0 [direction:rtl] [writing-mode:vertical-lr]"
    />
  </div>
);

const ModelView = () => (
  <Sunken
    className="min-h-0 flex-1 bg-white"
    inner="relative flex flex-col overflow-hidden pt-[2px] font-['Liberation_Mono','Courier_New',monospace] text-[15px] leading-[20px]"
  >
    <Model />
    <h2 className="pl-[51px] leading-[19px]">von Mises stress</h2>
    <div className="flex pl-[28px]">
      <LegendSlider />
      <div className="mt-[10px] w-[30px]">
        {bands.map((color) => (
          <div key={color} className="h-[20px] border-b border-white" style={{ backgroundColor: color }} />
        ))}
      </div>
      <ul className="ml-[11px]">
        {bandLabels.map((label) => (
          <li key={label} className="h-[20px]">
            {label}
          </li>
        ))}
      </ul>
    </div>
    <p className="mt-[6px] pl-[91px]">MPa</p>
    <p className="pl-[51px]">Time = 0.0008501 s</p>
    <p className="pl-[51px]">= 1.417E-05 min</p>
    <p className="mt-auto pb-[3px] pl-[51px]">Deformation scale factor 1</p>
    <Triad />
  </Sunken>
);

/* ---------- time chart ---------- */

const xTicks = Array.from({ length: 21 }, (_, i) => i);
const yTicks = Array.from({ length: 16 }, (_, i) => i);
const xLabels = ["0.0000", "0.0005", "0.0010", "0.0015", "0.0020"];
const yLabels = ["1.5", "1.0", "0.5", "0.0"];

const TimeChart = () => {
  const [time, setTime] = useState(852);
  const cursor = `${time / 20}%`;

  return (
    <Sunken className="h-[86px] shrink-0" inner="flex flex-col">
      <div className="mt-[8px] mr-[27px] ml-[68px] h-[37px] bg-white">
        <svg
          width="100%"
          height="37"
          className="overflow-visible"
          shapeRendering="crispEdges"
          fontFamily="Liberation Sans, Arial, sans-serif"
          fontSize="9"
        >
          {[12, 25].map((y) => (
            <line key={y} x1="0" x2="100%" y1={y} y2={y} stroke="#d0d0d0" />
          ))}
          {[25, 50, 75].map((p) => (
            <line key={p} x1={`${p}%`} x2={`${p}%`} y1="0" y2="37" stroke="#d0d0d0" />
          ))}
          <rect x="0" y="0" width="100%" height="37" fill="none" stroke="#000" />
          {xTicks.map((i) => (
            <line
              key={i}
              x1={`${i * 5}%`}
              x2={`${i * 5}%`}
              y1={i % 5 ? 35 : 32}
              y2={i % 5 ? 40 : 42}
              stroke="#000"
            />
          ))}
          {yTicks.map((i) => (
            <line key={i} x1={i % 5 ? -2 : -5} x2={i % 5 ? 3 : 6} y1={(i * 37) / 15} y2={(i * 37) / 15} stroke="#000" />
          ))}
          <svg x="100%" overflow="visible">
            {yTicks.map((i) => (
              <line key={i} x1={i % 5 ? -2 : -4} x2="0" y1={(i * 37) / 15} y2={(i * 37) / 15} stroke="#000" />
            ))}
          </svg>
          <line x1={cursor} x2={cursor} y1="0" y2="54" stroke="#000" />
          {yLabels.map((label, i) => (
            <text key={label} x="-10" y={3 + i * 12} textAnchor="end">
              {label}
            </text>
          ))}
          {xLabels.map((label, i) => (
            <text key={label} x={`${i * 25}%`} y="54" textAnchor="middle">
              {label}
            </text>
          ))}
          <text x="50%" y="69" textAnchor="middle" fontWeight="bold">
            time /s
          </text>
        </svg>
      </div>
      <div className="mt-[15px] flex items-start pr-[18px] pl-[5px]">
        <button
          type="button"
          aria-label="Play or pause"
          className="flex h-[18px] w-[21px] items-center justify-center border border-[#adadad] bg-[#e1e1e1]"
        >
          <svg width="13" height="10" viewBox="0 0 13 10" aria-hidden="true">
            <path d="M0 0l6 5-6 5zM7.500 0h2v10h-2zM11 0h2v10h-2z" fill="#000" />
          </svg>
        </button>
        <button
          type="button"
          aria-label="Playback options"
          className="ml-px flex h-[18px] w-[14px] items-center justify-center border border-[#adadad] bg-[#e1e1e1]"
        >
          <svg width="7" height="4" viewBox="0 0 7 4" aria-hidden="true">
            <path d="M0 0h7L3.500 4z" fill="#000" />
          </svg>
        </button>
        <input
          type="range"
          min="0"
          max="2000"
          aria-label="Time"
          value={time}
          onChange={(e) => setTime(Number(e.target.value))}
          className="mt-[3px] ml-[18px] h-[15px] min-w-0 flex-1 appearance-none bg-transparent [&::-webkit-slider-thumb]:h-[15px] [&::-webkit-slider-thumb]:w-[18px] [&::-webkit-slider-thumb]:appearance-none [&::-webkit-slider-thumb]:border [&::-webkit-slider-thumb]:border-[#adadad] [&::-webkit-slider-thumb]:bg-[#e1e1e1]"
        />
      </div>
    </Sunken>
  );
};

const StatusBar = () => (
  <footer className="flex h-[23px] shrink-0 items-center border-t border-[#d9d9d9] pl-1">
    <span>Elements: 177</span>
    <span className="ml-[18px]">Nodes: 357</span>
    <span className="ml-[18px]">Selected nodes: 0</span>
    <span className="ml-auto">(-0.43682, -1.1407, -0.56212) in</span>
    <svg width="11" height="11" viewBox="0 0 11 11" className="mt-[9px] mr-[2px] ml-[5px]" aria-hidden="true">
      <path d="M8 0h2v2H8zM4 4h2v2H4zM8 4h2v2H8zM0 8h2v2H0zM4 8h2v2H4zM8 8h2v2H8z" fill="#a8a8a8" />
    </svg>
  </footer>
);

const App = () => {
  return (
    <div className="flex h-screen min-h-[760px] flex-col border border-[#4b5f36] border-l-[#3c3c3c] bg-[#f0f0f0] font-['Open_Sans','Segoe_UI',sans-serif] text-black">
      <TitleBar />
      <MenuBar />
      <Toolbars />
      <div
        role="tablist"
        className="flex h-[23px] shrink-0 items-stretch font-['Liberation_Sans',Arial,sans-serif] text-[13px]"
      >
        <button
          type="button"
          role="tab"
          aria-selected="true"
          className="border-r border-[#d9d9d9] bg-white px-[7px] pb-[2px]"
        >
          Configuration
        </button>
        <span className="flex-1 border-b border-[#d9d9d9]" />
      </div>
      <main className="flex min-h-0 flex-1 gap-1 border-x-4 border-t border-b-[3px] border-white bg-[#f0f0f0] font-['Liberation_Sans',Arial,sans-serif]">
        <aside className="flex w-[234px] shrink-0 flex-col gap-1 text-xs">
          <div className="flex min-h-0 flex-1 flex-col font-['Open_Sans','Segoe_UI',sans-serif]">
            <TreePanel />
          </div>
          <SolverPanel />
        </aside>
        <section className="flex min-w-0 flex-1 flex-col gap-1">
          <ModelView />
          <TimeChart />
        </section>
      </main>
      <div className="shrink-0 font-['Liberation_Sans',Arial,sans-serif] text-xs">
        <StatusBar />
      </div>
    </div>
  );
};

export default App;
